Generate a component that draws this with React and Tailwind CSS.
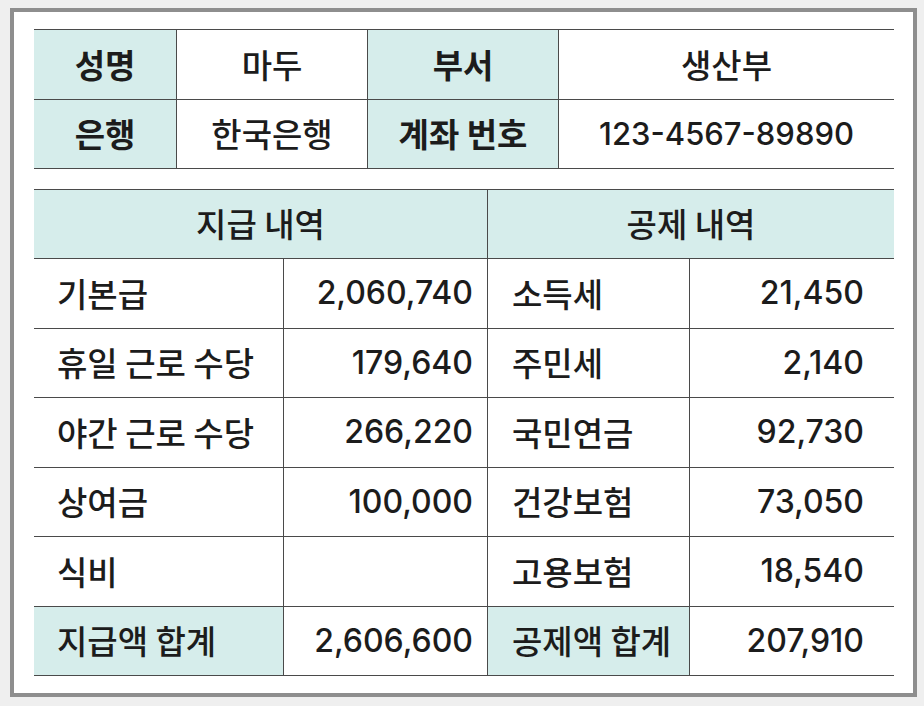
const info = [
  [
    { t: '성명', h: true },
    { t: '마두' },
    { t: '부서', h: true },
    { t: '생산부' },
  ],
  [
    { t: '은행', h: true },
    { t: '한국은행' },
    { t: '계좌 번호', h: true },
    { t: '123-4567-89890', n: true },
  ],
];

const pay = [
  ['기본급', '2,060,740', '소득세', '21,450'],
  ['휴일 근로 수당', '179,640', '주민세', '2,140'],
  ['야간 근로 수당', '266,220', '국민연금', '92,730'],
  ['상여금', '100,000', '건강보험', '73,050'],
  ['식비', '', '고용보험', '18,540'],
];

const kr = { fontFamily: '"Noto Sans CJK KR", "Noto Sans", sans-serif' };
const num = { fontFamily: 'Inter, "Noto Sans", sans-serif' };

export default function App() {
  return (
    <div className="w-[924px] h-[706px] bg-[#efefef] pt-[8px] pl-[10px]" style={kr}>
      <div className="w-[907px] h-[689px] border-4 border-[#8e8e8e] bg-white pt-[17px] pl-[20px] text-[#1c1c1c]">
        {/* 인적 사항 */}
        <div className="grid grid-cols-[143px_191px_191px_335px] w-[860px] border-t border-[#4a4a4a]">
          {info.map((row, i) =>
            row.map((c, j) => (
              <div
                key={i + '-' + j}
                style={c.n ? num : undefined}
                className={`flex items-center justify-center border-b border-[#4a4a4a] ${
                  c.n ? 'text-[31px]' : 'text-[33px]'
                } ${i === 0 ? 'h-[70px]' : 'h-[69px]'} ${j < 3 ? 'border-r' : ''} ${
                  c.h ? 'bg-[#d6edeb] font-bold' : 'font-medium'
                }`}
              >
                {c.t}
              </div>
            ))
          )}
        </div>

        {/* 지급 / 공제 내역 */}
        <div className="mt-[20px] grid grid-cols-[250px_204px_202px_204px] w-[860px] border-t border-[#4a4a4a] text-[33px] font-medium">
          <div className="col-span-2 h-[69px] flex items-center justify-center bg-[#d6edeb] border-b border-r border-[#4a4a4a]">
            지급 내역
          </div>
          <div className="col-span-2 h-[69px] flex items-center justify-center bg-[#d6edeb] border-b border-[#4a4a4a]">
            공제 내역
          </div>
          {pay.map((r, i) => (
            <Row key={i} r={r} />
          ))}
          <Row r={['지급액 합계', '2,606,600', '공제액 합계', '207,910']} total />
        </div>
      </div>
    </div>
  );
}

function Row({ r, total }) {
  const cell = 'h-[69.5px] flex items-center border-b border-[#4a4a4a]';
  const lab = total ? 'bg-[#d6edeb]' : '';
  return (
    <>
      <div className={`${cell} ${lab} border-r pl-[23px]`}>{r[0]}</div>
      <div className={`${cell} border-r justify-end pr-[14px] text-[32px]`} style={num}>
        {r[1]}
      </div>
      <div className={`${cell} ${lab} border-r pl-[24px]`}>{r[2]}</div>
      <div className={`${cell} justify-end pr-[30px] text-[32px]`} style={num}>
        {r[3]}
      </div>
    </>
  );
}
